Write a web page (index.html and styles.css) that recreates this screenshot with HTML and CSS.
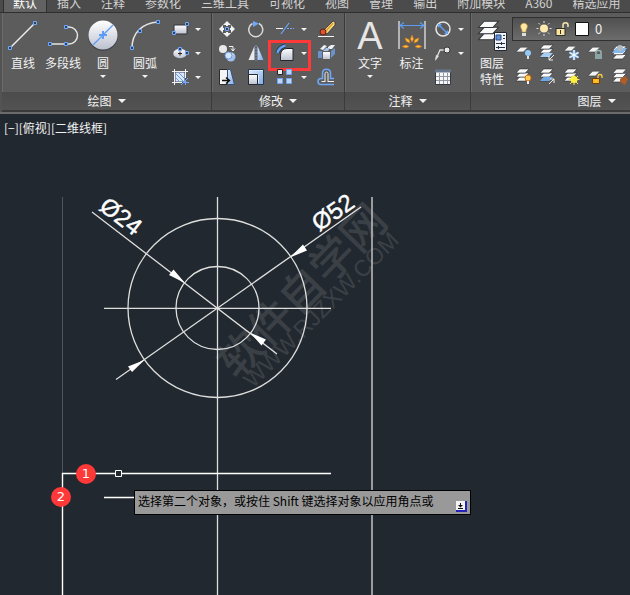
FILE: index.html
```
<!DOCTYPE html>
<html lang="zh-CN">
<head>
<meta charset="utf-8">
<title>CAD</title>
<link rel="stylesheet" href="styles.css">
</head>
<body>
<svg class="defs" aria-hidden="true">
  <defs>
    <linearGradient id="metal" x1="0" y1="0" x2="0" y2="1"><stop offset="0" stop-color="#ffffff"/><stop offset="1" stop-color="#bcc1d0"/></linearGradient>
    <linearGradient id="sky" x1="0" y1="0" x2="1" y2="1"><stop offset="0" stop-color="#e4eefc"/><stop offset="1" stop-color="#7fa9e6"/></linearGradient>
    <symbol id="node" viewBox="0 0 4 4"><path d="M.5.5h3v3h-3z" fill="#32415e" stroke="#6ea8ff"/></symbol>
    <symbol id="sheets" viewBox="0 0 16 15"><g fill="#fafafa" stroke="#34383e" stroke-width=".7"><path d="M1 14 5 9.500h10L11 14z"/><path d="M1 9.700 5 5.300h10l-4 4.400z"/><path d="M1 5.400 5 1h10l-4 4.400z"/></g></symbol>
    <symbol id="sheet" viewBox="0 0 16 8"><path d="M1 6 6 1h8L9 6z" fill="#f3f3f3" stroke="#3c4046" stroke-width=".6"/></symbol>
  </defs>
</svg>

<header class="ribbon">
  <nav class="tabs">
    <button class="tab active">默认</button><button class="tab">插入</button><button class="tab">注释</button><button class="tab">参数化</button><button class="tab">三维工具</button><button class="tab">可视化</button><button class="tab">视图</button><button class="tab">管理</button><button class="tab">输出</button><button class="tab">附加模块</button><button class="tab">A360</button><button class="tab">精选应用</button>
  </nav>
  <div class="panels">
    <section class="panel">
      <div class="body draw">
        <button class="tool"><svg viewBox="0 0 40 38"><path d="M7 31 32 6" stroke="#eee" stroke-width="1.500"/><use href="#node" x="5" y="29" width="4" height="4"/><use href="#node" x="30" y="4" width="4" height="4"/></svg>直线</button>
        <button class="tool"><svg viewBox="0 0 40 38"><path d="M7 27h19a8.500 8.500 0 0 0 0-17h-3" fill="none" stroke="#e4e4e4" stroke-width="1.500"/><use href="#node" x="5" y="25" width="4" height="4"/><use href="#node" x="21" y="25" width="4" height="4"/><use href="#node" x="21" y="8" width="4" height="4"/></svg>多段线</button>
        <button class="tool more"><svg viewBox="0 0 40 38"><circle cx="20" cy="19" r="15" fill="#43464b"/><circle cx="20" cy="18" r="14.500" fill="url(#metal)"/><path d="M10 28 30 8" stroke="#5e9cf5" stroke-width="1.200"/><path d="M16 18h8M20 14v8" stroke="#5e9cf5" stroke-width="2"/></svg>圆</button>
        <button class="tool more"><svg viewBox="0 0 40 38"><path d="M7 31C7 16 17 6 33 5" fill="none" stroke="#e4e4e4" stroke-width="1.500"/><use href="#node" x="5" y="29" width="4" height="4"/><use href="#node" x="13" y="12" width="4" height="4"/><use href="#node" x="31" y="3" width="4" height="4"/></svg>圆弧</button>
        <div class="small draw-small">
          <button class="icon" aria-label="矩形"><svg viewBox="0 0 24 24"><path d="M6 8h13v9H6z" fill="url(#metal)" stroke="#2f3338"/><use href="#node" x="4" y="14" width="4" height="4"/><use href="#node" x="17" y="5" width="4" height="4"/></svg></button><button class="drop" aria-label="更多"></button>
          <button class="icon" aria-label="椭圆"><svg viewBox="0 0 24 24"><ellipse cx="12" cy="12.500" rx="7" ry="5" fill="url(#metal)" stroke="#4a4d52" stroke-width=".5"/><path d="M10 12.500h4M12 10.500v4" stroke="#222"/><use href="#node" x="10" y="6" width="4" height="4"/><use href="#node" x="17" y="10" width="4" height="4"/></svg></button><button class="drop" aria-label="更多"></button>
          <button class="icon" aria-label="图案填充"><svg viewBox="0 0 24 24"><path d="M7 7h10v10H7z" fill="#dce8fa" stroke="#2c3e62"/><path d="m8 9 8 8M8 13l4 4M11 8l5 5" stroke="#6d9cdd"/><path d="M4 6.500h16M4 17.500h10M6.500 4v16M17.500 4v9" stroke="#f2f2f2"/><path d="m13 20 7-7M15 17.500h6M17.500 15v5" stroke="#6ea8ff"/></svg></button><button class="drop" aria-label="更多"></button>
        </div>
      </div>
      <button class="title">绘图</button>
    </section>

    <section class="panel">
      <div class="body modify">
        <button class="icon" aria-label="移动"><svg viewBox="0 0 24 24"><g fill="#f3f3f3"><path d="m12 4 4 4h-3v2h-2V8H8zM12 20l-4-4h3v-2h2v2h3zM4 12l4-4v3h2v2H8v3zM20 12l-4 4v-3h-2v-2h2V8z"/></g><path d="M9 9h6v6H9z" fill="#5c5c5c"/><use href="#node" x="10" y="10" width="4" height="4"/></svg></button>
        <button class="icon" aria-label="旋转"><svg viewBox="0 0 24 24"><path d="M15 6.500A7 7 0 1 1 8.500 6.500" fill="none" stroke="#d9d9d9" stroke-width="1.500"/><path d="m9 4 6 2.500L9 10z" fill="#6ea8ff"/></svg></button>
        <button class="icon" aria-label="修剪"><svg viewBox="0 0 24 24"><path d="M3 11.500h7" stroke="#f3f3f3"/><path d="m8 17 8-11" stroke="#6ea8ff" stroke-width="1.200"/><path d="M14 11.500h7" stroke="#6ea8ff" stroke-dasharray="2 1"/></svg></button>
        <button class="drop" aria-label="更多"></button>
        <button class="icon" aria-label="删除"><svg viewBox="0 0 24 24"><path d="m19 4 2 1v3l-8 9-4-3z" fill="#f3d681" stroke="#292a2c" stroke-width=".7"/><path d="m19 6-7 8" stroke="#e59b2d" stroke-width="1.500"/><ellipse cx="9" cy="15" rx="3" ry="3" fill="#df532a" stroke="#552319"/><path d="M4 19.500h16" stroke="#f3f3f3"/></svg></button>

        <button class="icon" aria-label="复制"><svg viewBox="0 0 24 24"><circle cx="8" cy="8" r="4" fill="#e9e9eb"/><circle cx="16" cy="16" r="4.500" fill="url(#sky)"/><circle cx="13.500" cy="14.500" r="3.500" fill="#d6e4f8" stroke="#6598df"/><path d="M14 5.500h4v4m-2-2 2 2.500 2-2.500" fill="none" stroke="#f5f5f5"/></svg></button>
        <button class="icon" aria-label="镜像"><svg viewBox="0 0 24 24"><path d="M10.500 5v14H4.500z" fill="#e9e9eb"/><path d="M13.500 5v14h6z" fill="url(#sky)"/><path d="M12 4v16" stroke="#5d9be8" stroke-dasharray="2 1"/></svg></button>
        <button class="icon marked" aria-label="圆角"><svg viewBox="0 0 24 24"><path d="M7.500 19.500V14Q8 7.500 14 7.500h6v12z" fill="url(#metal)" stroke="#24282e"/><path d="M4.500 12Q6 6 12.500 4.500" fill="none" stroke="#24303f" stroke-width="4"/><path d="M4.500 12Q6 6 12.500 4.500" fill="none" stroke="#63a2f7" stroke-width="2.500"/></svg></button>
        <button class="drop" aria-label="更多"></button>
        <button class="icon" aria-label="分解"><svg viewBox="0 0 24 24"><path d="m6 8 4-4 3 1-4 4zM14 6l3-2h4l-3 4h-4z" fill="#edf0f5"/><path d="M4 10h4v7H4zM17 10l4-3v6l-4 4z" fill="#6993ca"/><path d="M9 11h7v7H9z" fill="url(#metal)"/><path d="m9 10 3-3h4l-2 3z" fill="#a9c4e9"/></svg></button>

        <button class="icon" aria-label="拉伸"><svg viewBox="0 0 24 24"><path d="M4.500 4.500h8v15h-8z" fill="#f5f5f5" stroke="#292c30"/><path d="M12.500 4.500h3l4 15h-7z" fill="url(#sky)" stroke="#355176"/><path d="M7 15.500h7m-3-3 3.500 3-3.500 3" fill="none" stroke="#101010" stroke-width="1.500"/></svg></button>
        <button class="icon" aria-label="缩放"><svg viewBox="0 0 24 24"><path d="M4.500 4.500h15v15h-15z" fill="url(#sky)" stroke="#25354c"/><path d="M7 5.500h12M14.500 10v8" stroke="#d8e7ff"/><path d="M4.500 9.500h9v10h-9z" fill="url(#metal)" stroke="#26292d"/></svg></button>
        <button class="icon" aria-label="阵列"><svg viewBox="0 0 24 24"><path d="M4.500 4.500h5v5h-5z" fill="#eee" stroke="#24272a"/><g fill="#bed5f5" stroke="#6ea5f3"><path d="M13.500 4.500h5v5h-5zM4.500 13.500h5v5h-5zM13.500 13.500h5v5h-5z"/></g></svg></button>
        <button class="drop" aria-label="更多"></button>
        <button class="icon" aria-label="偏移"><svg viewBox="0 0 24 24"><path d="M20 19.500H7c-4 0-4-6 0-6h1.500V8c0-5 8-5 8 0v5.500H20" fill="none" stroke="#6ea8f7" stroke-width="1.500"/><path d="M20 16.500H7.500M11 16V8.500c0-2 3-2 3 0V16" fill="none" stroke="#f0f0f0"/><path d="M11.500 16h2v1h-2z" fill="#5c5c5c"/></svg></button>
      </div>
      <button class="title">修改</button>
    </section>

    <section class="panel">
      <div class="body annotate">
        <button class="tool more"><svg viewBox="0 0 40 38"><text class="letter" x="20" y="32">A</text></svg>文字</button>
        <button class="tool"><svg viewBox="0 0 40 38"><path d="M7 4v28M33 4v28" stroke="#eee" stroke-width="1.200"/><path d="M8 8.500h24M12 5.500l-4 3 4 3M28 5.500l4 3-4 3" fill="none" stroke="#5c9cf6" stroke-width="1.200"/><g fill="#ffc43b" stroke="#d7791d" stroke-width=".7"><path d="m20 18 1.500 4-1.500 3-1.500-3zM13 21l4 1.500 1 3.500-3.500-1.500zM27 21l-1.500 3.500L22 26l1-3.500zM10 29.500l4-1.500 3 1.500-3 1.500zM30 29.500 26 28l-3 1.500 3 1.500z"/></g></svg>标注</button>
        <div class="small annotate-small">
          <button class="icon" aria-label="直径"><svg viewBox="0 0 24 24"><circle cx="12" cy="12" r="7" fill="none" stroke="#e6e6e6" stroke-width="1.500"/><path d="m8 8 8 8" stroke="#65a2f5" stroke-width="1.300"/><path d="M7 7h4l-4 4zM17 17h-4l4-4z" fill="#65a2f5"/></svg></button><button class="drop" aria-label="更多"></button>
          <button class="icon" aria-label="引线"><svg viewBox="0 0 24 24"><path d="m5 18 4-9h4" fill="none" stroke="#ddd" stroke-width="1.300"/><path d="m4 20 1-6 3 1z" fill="#ddd"/><circle cx="16" cy="9" r="3" fill="#e8e8e8" stroke="#35383c"/></svg></button><button class="drop" aria-label="更多"></button>
          <button class="icon" aria-label="表格"><svg viewBox="0 0 24 24"><path d="M4.500 5.500h15v14h-15z" fill="#f7f7f7" stroke="#353b43"/><path d="M4 4.500h16v3H4z" fill="#66778d"/><path d="M5 11.500h14M5 15.500h14M8.500 8v11M12.500 8v11M16.500 8v11" stroke="#9097a0"/></svg></button>
        </div>
      </div>
      <button class="title">注释</button>
    </section>

    <section class="panel layers-panel">
      <div class="body layers">
        <button class="tool"><svg viewBox="0 0 40 38"><use href="#sheets" x="5" y="2" width="23" height="23"/><path d="M22.500 15.500h12v18h-12z" fill="#f1f4fa" stroke="#232931"/><path d="M24 18h5v5h-5z" fill="#5f91d8" stroke="#294c80"/><path d="M31 18.500h2M31 21.500h2M24 26.500h9M24 30.500h9M29.500 25v3M26.500 29v3" stroke="#27313d"/></svg>图层<br>特性</button>
        <div class="layer-tools">
          <button class="layer-select"><svg viewBox="0 0 76 22"><path d="M9 14v-2c-6-9 10-9 4 0v2z" fill="#ffe7a0" stroke="#bd9c52" stroke-width=".7"/><path d="M9 15h4v3H9z" fill="#ddd"/><circle cx="31" cy="10.500" r="4" fill="#ffeab0"/><path d="M31 3v2M31 16v2M23.500 10.500h2M36.500 10.500h2M25.500 5l1.500 1.500M35 14.500l1.500 1.500M25.500 16l1.500-1.500M35 6.500 36.500 5" stroke="#ddd"/><path d="M43 10.500h9v7h-9z" fill="#fbe5a1" stroke="#2e2f2e"/><path d="M50 10V7c0-3 5-3 5 0v2" fill="none" stroke="#f6e6b0" stroke-width="1.500"/><path d="M47.500 12v4" stroke="#333"/><path d="M62.500 4.500h13v13h-13z" fill="#fff" stroke="#111"/></svg><span>0</span></button>
          <div class="layer-grid">
            <button class="icon" aria-label="关闭图层"><svg viewBox="0 0 24 24"><use href="#sheet" x="3" y="5" width="15" height="8"/><circle cx="16" cy="12" r="3" fill="#94c8f5"/><path d="M15 15h2v3h-2z" fill="#ddd"/></svg></button>
            <button class="icon" aria-label="隔离图层"><svg viewBox="0 0 24 24"><use href="#sheets" x="3" y="3" width="15" height="14"/><path d="m4 16 4-4h9l-4 4z" fill="#a4cdf5"/><path d="m18 14-5 5m0-4v4h4" fill="none" stroke="#eee"/></svg></button>
            <button class="icon" aria-label="冻结图层"><svg viewBox="0 0 24 24"><use href="#sheet" x="3" y="4" width="15" height="8"/><path d="M14 9v10M9.500 11.500l9 5M9.500 16.500l9-5" stroke="#8fc0f5" stroke-width="2.500"/><path d="M14 9v10M9.500 11.500l9 5M9.500 16.500l9-5" stroke="#fff"/></svg></button>
            <button class="icon" aria-label="锁定图层"><svg viewBox="0 0 24 24"><use href="#sheet" x="3" y="5" width="15" height="8"/><path d="M11 13h7v5h-7z" fill="#8aa6a4"/><path d="M12 13v-2c0-2 5-2 5 0v2" fill="none" stroke="#9bb5b2" stroke-width="1.500"/></svg></button>
            <button class="icon" aria-label="置为当前"><svg viewBox="0 0 24 24"><use href="#sheets" x="3" y="4" width="17" height="15"/><path d="m4 12 4-5h11l-4 5z" fill="#86b9eb"/><circle cx="12" cy="7" r="3" fill="#b2bac3"/></svg></button>
            <button class="icon" aria-label="打开图层"><svg viewBox="0 0 24 24"><use href="#sheets" x="3" y="3" width="15" height="14"/><circle cx="16" cy="13" r="3" fill="#ffd054" stroke="#d96a12"/><path d="M15 16h2v3h-2z" fill="#eee"/></svg></button>
            <button class="icon" aria-label="取消隔离"><svg viewBox="0 0 24 24"><use href="#sheets" x="3" y="3" width="15" height="14"/><path d="m4 16 4-4h9l-4 4z" fill="#70a7e5"/><path d="m13 19 5-5m-4 0h4v4" fill="none" stroke="#eee"/></svg></button>
            <button class="icon" aria-label="解冻图层"><svg viewBox="0 0 24 24"><use href="#sheets" x="3" y="3" width="15" height="14"/><path d="M14 9v11M8.500 14.500h11M10 11l8 8M10 19l8-8" stroke="#ffe158"/><circle cx="14" cy="14.500" r="3.500" fill="#fff040"/></svg></button>
            <button class="icon" aria-label="解锁图层"><svg viewBox="0 0 24 24"><use href="#sheet" x="3" y="5" width="15" height="8"/><path d="M8.500 13.500h7v5h-7z" fill="#ffb422" stroke="#6b450e"/><path d="M14 13v-2c0-2 4-2 4 0v2M12 15v2" fill="none" stroke="#ffcf47" stroke-width="1.300"/></svg></button>
            <button class="icon" aria-label="匹配图层"><svg viewBox="0 0 24 24"><use href="#sheets" x="3" y="3" width="17" height="15"/><path d="m12 14 5-3 3 3-3 6-5-3z" fill="#ad5d28"/></svg></button>
          </div>
        </div>
      </div>
      <button class="title">图层</button>
    </section>
  </div>
</header>

<main class="canvas">
  <p class="view-label">[−][俯视][二维线框]</p>
  <svg class="drawing" width="630" height="481" viewBox="0 114 630 481">
    <g class="watermark">
      <text class="mark-name" transform="translate(237 381) rotate(-46)">软件自学网</text>
      <text class="mark-url" transform="translate(253 389) rotate(-45)">WWW.RJZXW.COM</text>
    </g>
    <path d="M62.500 197v276" stroke="#50555b"/>
    <path d="M372 197v398" stroke="#b9b8bb" stroke-width="1.600"/>
    <g class="lines">
      <circle cx="217.500" cy="308" r="89.500"/><circle cx="217.500" cy="308" r="41.500"/>
      <path d="M104 308.300h227M217.500 197v398"/>
      <path d="m92 212 185 142M116 379.500 361 207"/>
    </g>
    <path class="edge" d="M62.500 595V473.500H331M104 497.500h31"/>
    <path fill="#fff" d="m185 283-16-8 4.500-5.500zM144.500 360l-16.500 6.500 4 5.500zM290 257.500l13-13 4 6zM250 332.500l16 7-4.500 6z"/>
    <path d="M115.500 470.500h6v6h-6z" fill="#22282f" stroke="#fff"/>
    <text class="dimension" transform="translate(98 209) rotate(37.500)">Ø24</text>
    <text class="dimension" transform="translate(319 232) rotate(-35)">Ø52</text>
  </svg>
  <span class="badge first">1</span>
  <span class="badge second">2</span>
  <div class="prompt"><span>选择第二个对象，或按住 Shift 键选择对象以应用角点或</span><button class="expand" aria-label="选项"><svg viewBox="0 0 11 11"><path d="M0 0h11v11H0z" fill="#2424b8"/><path d="M0 0h9v9H0z" fill="#f2f2f2"/><path d="M2 4h5L4.500 6.500zM4 2h1v3H4zM2 7h5v1H2z" fill="#111"/></svg></button></div>
</main>
</body>
</html>
```
FILE: styles.css
```
*, *::before, *::after { box-sizing: border-box; }
body {
  margin: 0;
  min-height: 100vh;
  display: flex;
  flex-direction: column;
  overflow: hidden;
  background: #22282f;
  color: #f2f2f2;
  font: 12px/16px "Noto Sans CJK SC", sans-serif;
}
button {
  margin: 0;
  padding: 0;
  border: 0;
  background: none;
  color: inherit;
  font: inherit;
}
svg { display: block; }
.defs { position: absolute; width: 0; height: 0; }

.ribbon {
  overflow: hidden;
  background: #535353;
  border-bottom: 2px solid #6b6b6b;
}
.tabs {
  display: flex;
  align-items: flex-end;
  height: 13px;
  padding-left: 3px;
  background: #4b4b4b;
  border-bottom: 1px solid #2f2f2f;
  overflow: hidden;
}
.tab {
  flex: none;
  height: 17px;
  padding: 0 10px 1px;
  color: #d2d2d2;
}
.tab.active {
  color: #fff;
  background: #626262;
  border: solid #303030;
  border-width: 0 1px;
  padding: 0 9px 1px;
}
.panels { display: flex; padding-left: 2px; }
.panel {
  flex: none;
  border: solid #3a3a3a;
  border-width: 0 1px 2px 0;
  box-shadow: inset 1px 0 #6a6a6a;
  background: #5c5c5c;
}
.body { display: grid; height: 79px; padding: 4px 1px 0; }
.draw { grid-template-columns: 40px 40px 40px 44px auto; padding-right: 8px; }
.modify {
  grid-template-columns: 28px 29px 29px 9px 35px;
  grid-auto-rows: 24px;
  justify-items: center;
}
.annotate { grid-template-columns: 48px 35px auto; padding-right: 5px; }
.small { display: grid; grid-auto-rows: 24px; align-content: start; justify-items: center; }
.draw-small { grid-template-columns: 26px 10px; }
.annotate-small { grid-template-columns: 28px 8px; }
.title {
  display: flex;
  align-items: center;
  justify-content: center;
  gap: 6px;
  width: 100%;
  height: 18px;
  background: linear-gradient(#4b4b4b, #535353);
}
.title::after {
  content: "";
  border: solid transparent;
  border-width: 4px 4px 0;
  border-top-color: #f2f2f2;
}
.tool {
  display: flex;
  flex-direction: column;
  align-items: center;
  white-space: nowrap;
}
.tool svg { width: 40px; height: 38px; flex: none; }
.more::after, .drop::after {
  content: "";
  border: solid transparent;
  border-width: 3px 3px 0;
  border-top-color: #f2f2f2;
}
.more::after { margin-top: 4px; }
.drop { display: flex; align-items: center; justify-content: center; width: 10px; height: 24px; }
.icon { position: relative; width: 24px; height: 24px; }
.icon svg { width: 24px; height: 24px; }
.marked::after {
  content: "";
  position: absolute;
  left: -5px;
  top: -1px;
  width: 43px;
  height: 31px;
  border: 3px solid #ff3838;
}
.letter { font: 38px "Liberation Sans", sans-serif; fill: #e6e6e6; text-anchor: middle; }
.layers-panel { width: 252px; }
.layers { grid-template-columns: 40px 1fr; }
.layer-select {
  display: flex;
  align-items: center;
  gap: 6px;
  width: 100%;
  height: 24px;
  border: 1px solid #303030;
  background: linear-gradient(#505050, #6c6c6c);
  font-size: 13px;
}
.layer-select svg { width: 76px; height: 22px; }
.layer-grid {
  display: grid;
  grid-template-columns: repeat(5, 24px);
  grid-auto-rows: 24px;
}

.canvas { position: relative; flex: 1; background: #22282f; }
.view-label { position: absolute; left: 4px; top: 6px; margin: 0; }
.lines { fill: none; stroke: #dedede; stroke-width: 1.3px; }
.edge { fill: none; stroke: #fff; stroke-width: 1.4px; }
.dimension { font: 24px "Liberation Sans", sans-serif; fill: #fff; stroke: #fff; stroke-width: .4px; }
.watermark { fill: #3b4046; }
.mark-name { font: 500 44px "Noto Sans CJK SC", sans-serif; }
.mark-url { font: 23px "Liberation Sans", sans-serif; }
.badge {
  position: absolute;
  width: 20px;
  height: 20px;
  border-radius: 50%;
  background: #ff3838;
  color: #fff;
  font: 13px/20px "DejaVu Sans", sans-serif;
  text-align: center;
}
.first { left: 76px; top: 350px; }
.second { left: 51px; top: 373px; }
.prompt {
  position: absolute;
  left: 134px;
  top: 376px;
  display: flex;
  gap: 20px;
  width: 337px;
  height: 25px;
  padding: 2px 3px;
  border: 1px solid #000;
  background: #999;
  color: #000;
  white-space: nowrap;
}
.expand { align-self: flex-end; width: 11px; height: 11px; margin-left: auto; }
```
